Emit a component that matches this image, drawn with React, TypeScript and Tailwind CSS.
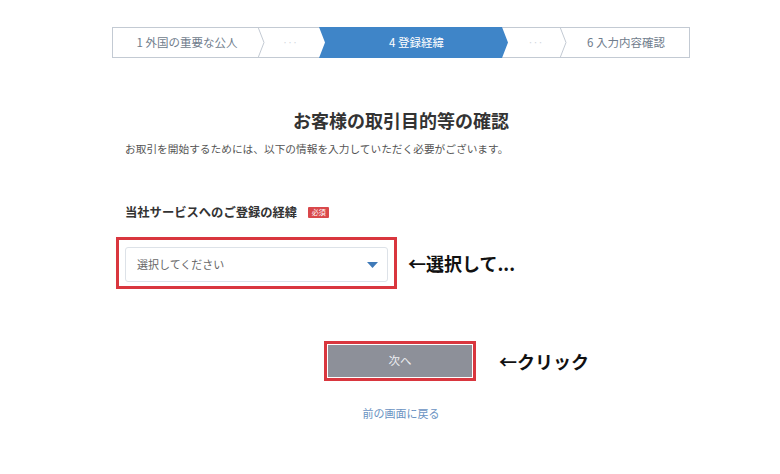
import React from 'react';

const Chevron = () => (
  <svg
    width="9"
    height="31"
    viewBox="0 0 9 31"
    className="absolute right-[-5px] top-[-1px] z-10"
  >
    <path d="M1 0 L7 15.5 L1 31" fill="none" stroke="#c3cad3" strokeWidth="1" />
  </svg>
);

const StepBar = () => (
  <div className="flex h-[31px] w-[578px] border border-[#c3cad3] bg-white text-[11.5px] text-[#6f7c8c]">
    <div className="relative flex w-[148px] items-center justify-center">
      <span>1 外国の重要な公人</span>
      <Chevron />
    </div>
    <div className="flex w-[58px] items-center justify-center text-[9px] text-[#cfd5dc]">
      <span>···</span>
    </div>
    <div className="-mt-px flex h-[31px] w-[189px] items-center justify-center bg-[#3f85c8] text-white [clip-path:polygon(0_0,calc(100%-6px)_0,100%_50%,calc(100%-6px)_100%,0_100%,6px_50%)]">
      <span className="pl-[6px]">4 登録経緯</span>
    </div>
    <div className="relative flex w-[55px] items-center justify-center text-[9px] text-[#cfd5dc]">
      <span>···</span>
      <Chevron />
    </div>
    <div className="flex flex-1 items-center justify-center">
      <span>6 入力内容確認</span>
    </div>
  </div>
);

export default function App() {
  return (
    <div className="h-[474px] w-[780px] bg-white font-['Noto_Sans_CJK_JP','Noto_Sans',sans-serif]">
      <div className="ml-[112px] flex w-[578px] flex-col pt-[27px]">
        <StepBar />

        {/* Heading */}
        <h1 className="mt-[49px] text-center text-[18px] font-bold leading-[26px] text-[#333]">
          お客様の取引目的等の確認
        </h1>
        <p className="mt-[8px] pl-[13px] text-[10.7px] leading-[16px] text-[#555]">
          お取引を開始するためには、以下の情報を入力していただく必要がございます。
        </p>

        {/* Field label */}
        <div className="mt-[46px] flex items-center gap-[11px] pl-[13px]">
          <span className="text-[12.3px] font-bold leading-[18px] text-[#333]">
            当社サービスへのご登録の経緯
          </span>
          <span className="flex h-[11px] w-[21px] items-center justify-center rounded-[1px] bg-[#d9484b] text-[7px] text-white">
            必須
          </span>
        </div>

        {/* Select */}
        <div className="mt-[16px] ml-[4px] flex items-center">
          <div className="w-[281px] border-[3px] border-[#d9363e] px-[6px] pt-[7px] pb-[4px]">
            <div className="flex h-[35px] items-center justify-between rounded-[3px] border border-[#dde2e8] bg-white pl-[11px] pr-[9px]">
              <span className="text-[11px] text-[#666]">選択してください</span>
              <svg width="11" height="6" viewBox="0 0 11 6">
                <path d="M0 0 H11 L5.5 6 Z" fill="#3f7ab8" />
              </svg>
            </div>
          </div>
          <span className="ml-[11px] text-[18px] font-bold text-[#111]">←選択して...</span>
        </div>

        {/* Next button */}
        <div className="mt-[52px] ml-[212px] flex items-center">
          <div className="border-[3px] border-[#d9363e] p-[1px]">
            <button className="flex h-[32px] w-[144px] items-center justify-center bg-[#8d9099] text-[11.5px] text-[#eceef2]">
              次へ
            </button>
          </div>
          <span className="ml-[23px] text-[18px] font-bold text-[#111]">←クリック</span>
        </div>

        <a className="mt-[24px] text-center text-[11px] leading-[16px] text-[#6a93c2]">
          前の画面に戻る
        </a>
      </div>
    </div>
  );
}
